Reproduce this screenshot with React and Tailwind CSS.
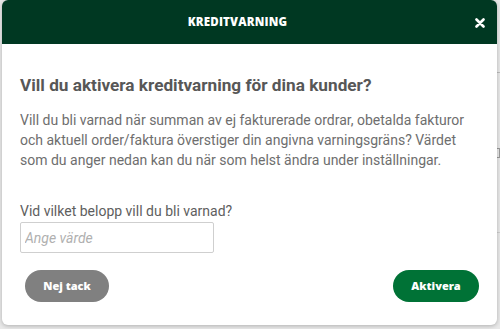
import React from 'react';

const App = () => {
  return (
    <div className="relative w-[500px] h-[329px] overflow-hidden bg-[#e9e9e9]" style={{ fontFamily: 'Roboto, "Liberation Sans", sans-serif' }}>
      {/* page behind the modal, peeking out on the right */}
      <div className="absolute right-0 top-[72px] w-[6px] h-px bg-[#bdbdbd]" />
      <div className="absolute right-0 top-[148px] w-[6px] h-[10px] border border-[#9a9a9a]" />
      <div className="absolute right-0 top-[232px] w-[6px] h-px bg-[#cfcfcf]" />

      <div className="relative ml-[2px] w-[495px] h-[325px] bg-white rounded-md overflow-hidden shadow-[0_1px_4px_rgba(0,0,0,0.25)] flex flex-col">
        <div className="relative h-[44px] shrink-0 bg-[#003822] flex items-center justify-center pr-[24px]">
          <span className="text-white text-[11.5px] font-extrabold tracking-[0.2px]" style={{ fontFamily: '"Open Sans", sans-serif' }}>KREDITVARNING</span>
          <button className="absolute right-[12px] top-[18px] text-white">
            <svg width="10" height="10" viewBox="0 0 10 10">
              <path d="M1.5 1.5 L8.5 8.5 M8.5 1.5 L1.5 8.5" stroke="white" strokeWidth="2.6" strokeLinecap="round" />
            </svg>
          </button>
        </div>

        <div className="px-[18px] pt-[29px] flex-1 flex flex-col">
          <h2 className="text-[17.2px] leading-[24px] font-bold text-[#575757]">Vill du aktivera kreditvarning för dina kunder?</h2>
          <p className="mt-[13px] text-[14px] leading-[20px] text-[#6e6e6e]">
            Vill du bli varnad när summan av ej fakturerade ordrar, obetalda fakturor<br />
            och aktuell order/faktura överstiger din angivna varningsgräns? Värdet<br />
            som du anger nedan kan du när som helst ändra under inställningar.
          </p>

          <label className="mt-[32px] text-[14px] leading-[18px] text-[#5e5e5e]">Vid vilket belopp vill du bli varnad?</label>
          <input
            className="mt-[2px] w-[194px] h-[31px] border border-[#cfcfcf] rounded-[2px] px-[4px] text-[14px] italic placeholder:text-[#b0b0b0] outline-none"
            placeholder="Ange värde"
          />

          <div className="mt-[17px] flex justify-between pl-[5px] pr-0">
            <button className="w-[84px] h-[32px] rounded-full bg-[#808080] text-white text-[11px] font-extrabold" style={{ fontFamily: '"Open Sans", sans-serif' }}>Nej tack</button>
            <button className="w-[86px] h-[32px] rounded-full bg-[#007236] text-white text-[11px] font-extrabold" style={{ fontFamily: '"Open Sans", sans-serif' }}>Aktivera</button>
          </div>
        </div>
      </div>
    </div>
  );
};

export default App;
